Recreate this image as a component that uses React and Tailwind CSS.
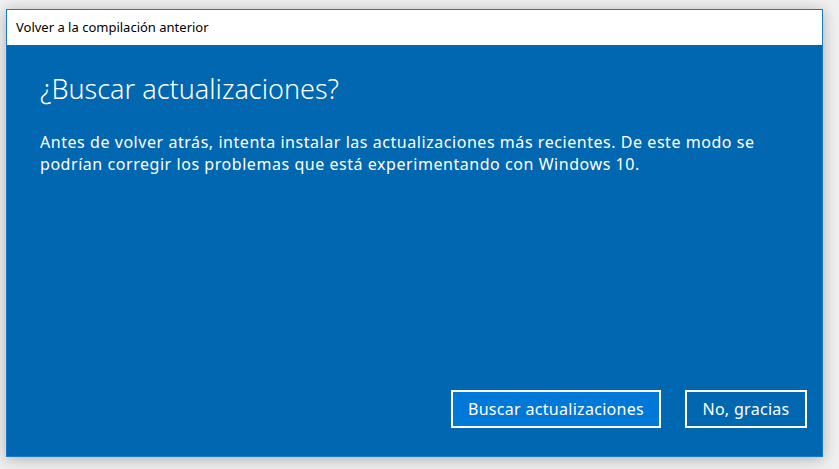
export default function App() {
  return (
    <div className="w-[839px] h-[469px] bg-[#f0f0f0] pt-[9px] pl-[6px] overflow-hidden" style={{ fontFamily: '"Noto Sans", "Open Sans", sans-serif' }}>
      <div className="w-[817px] h-[448px] border border-[#1979ca] flex flex-col shadow-[0_2px_14px_rgba(0,0,0,0.28)]">
        <div className="h-[35px] bg-white flex items-center pl-[9px] text-[13px] text-black shrink-0">
          Volver a la compilación anterior
        </div>
        <div className="flex-1 bg-[#0067b0] text-white flex flex-col px-[33px] pt-[26px] pb-[28px]">
          <h1 className="text-[27px] font-light leading-[36px]">¿Buscar actualizaciones?</h1>
          <p className="mt-[24px] text-[16px] leading-[22px] tracking-[0.55px] w-[760px]">
            Antes de volver atrás, intenta instalar las actualizaciones más recientes. De este modo se podrían corregir los problemas que está experimentando con Windows 10.
          </p>
          <div className="mt-auto flex justify-end gap-[24px] -mr-[18px]">
            <button className="w-[210px] h-[38px] border-2 border-white bg-[#0078d7] text-[16px] tracking-[0.3px] text-white">
              Buscar actualizaciones
            </button>
            <button className="w-[122px] h-[38px] border-2 border-white bg-[#0067b0] text-[16px] tracking-[0.3px] text-white">
              No, gracias
            </button>
          </div>
        </div>
      </div>
    </div>
  );
}
